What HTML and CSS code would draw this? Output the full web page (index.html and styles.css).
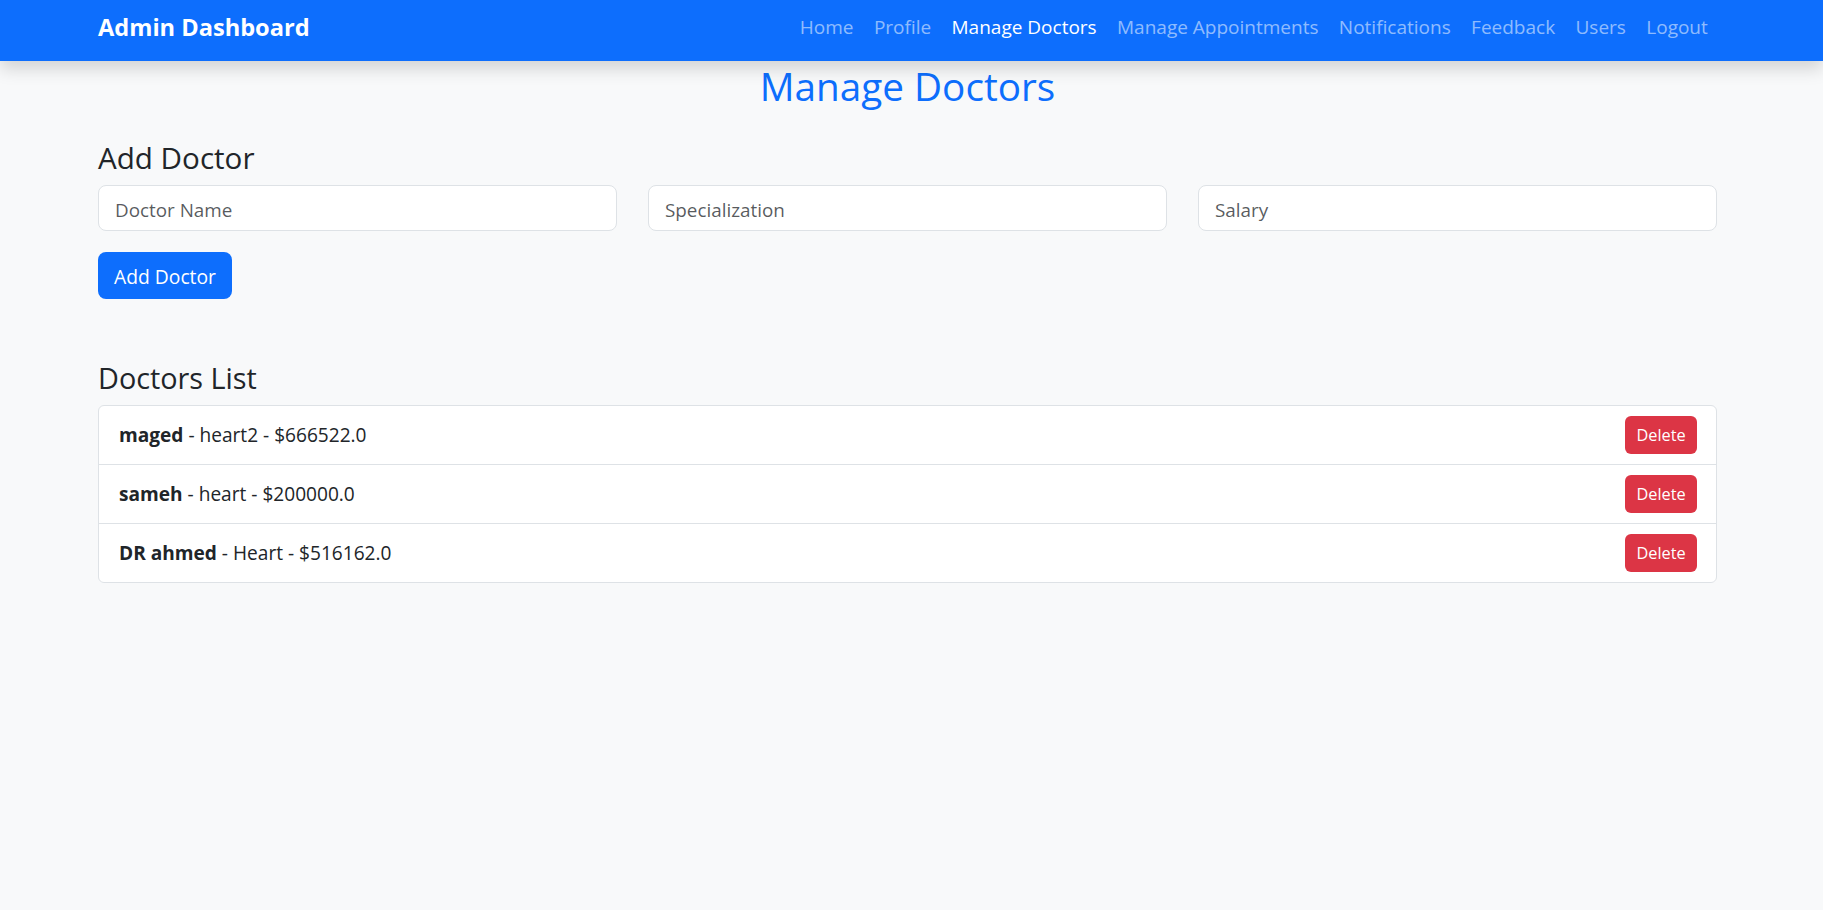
FILE: index.html
```html
<!DOCTYPE html>
<html lang="en">
<head>
<meta charset="utf-8">
<title>Manage Doctors</title>
<link rel="stylesheet" href="styles.css">
</head>
<body>
<nav class="navbar">
  <div class="nav-inner">
    <a class="brand" href="#">Admin Dashboard</a>
    <ul class="nav-links">
      <li><a class="nav-link" href="#">Home</a></li>
      <li><a class="nav-link" href="#">Profile</a></li>
      <li><a class="nav-link active" href="#">Manage Doctors</a></li>
      <li><a class="nav-link" href="#">Manage Appointments</a></li>
      <li><a class="nav-link" href="#">Notifications</a></li>
      <li><a class="nav-link" href="#">Feedback</a></li>
      <li><a class="nav-link" href="#">Users</a></li>
      <li><a class="nav-link" href="#">Logout</a></li>
    </ul>
  </div>
</nav>
<main class="container">
  <h1 class="page-title">Manage Doctors</h1>
  <section class="add-section">
    <h2 class="section-title">Add Doctor</h2>
    <form class="add-form">
      <div class="field-row">
        <input class="form-control" type="text" placeholder="Doctor Name">
        <input class="form-control" type="text" placeholder="Specialization">
        <input class="form-control" type="text" placeholder="Salary">
      </div>
      <button class="btn btn-primary" type="button">Add Doctor</button>
    </form>
  </section>
  <section class="list-section">
    <h3 class="list-title">Doctors List</h3>
    <ul class="list-group">
      <li class="list-item"><span><strong>maged</strong> - heart2 - $666522.0</span><button class="btn-delete" type="button">Delete</button></li>
      <li class="list-item"><span><strong>sameh</strong> - heart - $200000.0</span><button class="btn-delete" type="button">Delete</button></li>
      <li class="list-item"><span><strong>DR ahmed</strong> - Heart - $516162.0</span><button class="btn-delete" type="button">Delete</button></li>
    </ul>
  </section>
</main>
</body>
</html>
```
FILE: styles.css
```css
* { box-sizing: border-box; }
html, body { margin: 0; padding: 0; }
body {
  background: #f8f9fa;
  color: #212529;
  font-family: "Open Sans", "Noto Sans", sans-serif;
  font-size: 16px;
}
.navbar {
  position: relative;
  z-index: 2;
  background: #0d6efd;
  height: 61px;
  box-shadow: 0 8px 16px rgba(0,0,0,.15);
}
.nav-inner {
  height: 100%;
  padding: 0 105px 0 98px;
  display: flex;
  align-items: center;
  justify-content: space-between;
}
.brand {
  color: #fff;
  font-weight: 700;
  font-size: 23.6px;
  line-height: 30px;
  padding-bottom: 8px;
  text-decoration: none;
}
.nav-links {
  list-style: none;
  margin: 0;
  padding: 0 0 7px;
  display: flex;
}
.nav-link {
  display: block;
  padding: 0 10.2px;
  color: rgba(255,255,255,.55);
  text-decoration: none;
  font-size: 19px;
  line-height: 28px;
}
.nav-link.active { color: #fff; }
.container {
  padding: 0 106px 0 98px;
}
.page-title {
  margin: 0;
  text-align: center;
  color: #0d6efd;
  font-weight: 500;
  font-size: 38.7px;
  line-height: 51px;
}
.section-title {
  margin: 28px 0 9px;
  font-weight: 500;
  font-size: 29.6px;
  line-height: 36px;
}
.field-row {
  display: grid;
  grid-template-columns: repeat(3, 1fr);
  gap: 31px;
}
.form-control {
  height: 46px;
  border: 1px solid #dee2e6;
  border-radius: 8px;
  background: #fff;
  padding: 3px 16px 0;
  font-family: inherit;
  font-size: 18.85px;
  color: #212529;
}
.form-control::placeholder { color: rgba(33,37,41,.75); }
.btn {
  display: block;
  margin-top: 21px;
  height: 47px;
  padding: 2px 16px 0;
  border: 0;
  border-radius: 8px;
  font-family: inherit;
  font-size: 19.3px;
}
.btn-primary { background: #0d6efd; color: #fff; }
.list-title {
  margin: 62px 0 10px;
  font-weight: 500;
  font-size: 28.8px;
  line-height: 34px;
}
.list-group {
  list-style: none;
  margin: 0;
  padding: 0;
  background: #fff;
  border: 1px solid #dee2e6;
  border-radius: 6px;
}
.list-item {
  display: flex;
  align-items: center;
  justify-content: space-between;
  padding: 10px 19px 10px 20px;
  font-size: 19.1px;
  line-height: 28px;
}
.list-item + .list-item { border-top: 1px solid #dee2e6; }
.btn-delete {
  width: 72px;
  height: 38px;
  border: 0;
  border-radius: 6px;
  background: #dc3545;
  color: #fff;
  font-family: inherit;
  font-size: 16.3px;
  padding: 0;
}
```
